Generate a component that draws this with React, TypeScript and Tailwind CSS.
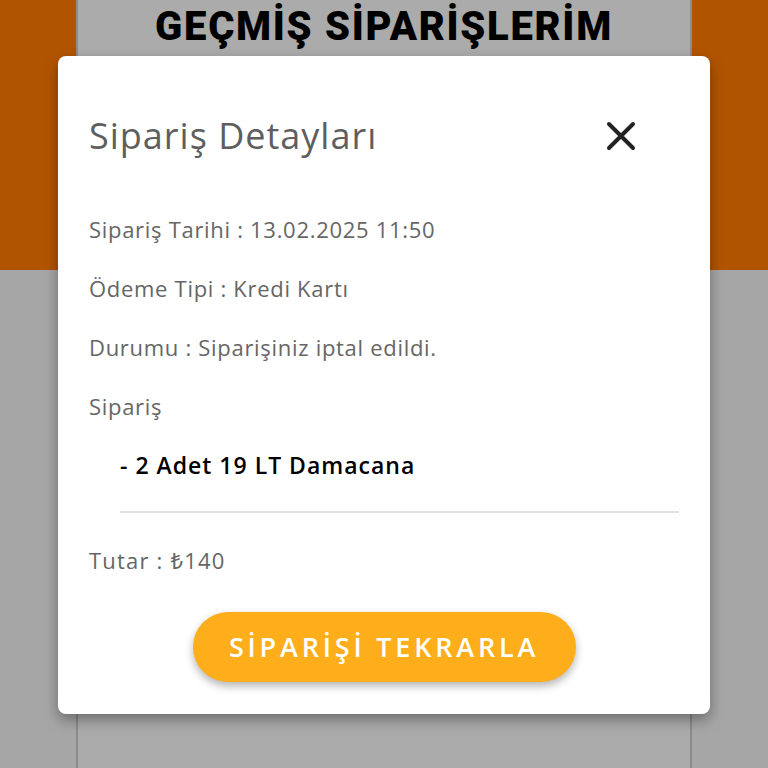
import React from 'react';

const font = { fontFamily: '"Open Sans", "Noto Sans", sans-serif' };

const rows = [
  'Sipariş Tarihi : 13.02.2025 11:50',
  'Ödeme Tipi : Kredi Kartı',
  'Durumu : Siparişiniz iptal edildi.',
  'Sipariş',
];

export default function App() {
  return (
    <div
      className="relative h-[768px] w-full overflow-hidden bg-[linear-gradient(to_bottom,#b15400_270px,#a6a6a6_270px)]"
      style={font}
    >
      {/* page behind the dialog */}
      <div className="mx-auto h-full w-[616px] border-x-2 border-[#8c8c8c] bg-[#ababab]">
        <h1 className="pt-[3px] text-center text-[40px] font-black leading-[48px] tracking-[1.7px] text-black" style={{ fontFamily: 'Roboto, sans-serif' }}>
          GEÇMİŞ SİPARİŞLERİM
        </h1>
      </div>

      {/* dialog */}
      <div className="absolute inset-0 flex justify-center pt-[56px]">
        <div className="h-[658px] w-[652px] rounded-[8px] bg-white px-[31px] shadow-[0_6px_14px_rgba(0,0,0,0.35)]">
          <div className="flex h-[144px] items-start justify-between pt-[59px]">
            <h2 className="text-[36px] leading-[42px] font-normal tracking-[1px] text-[#5e5e5e]">Sipariş Detayları</h2>
            <svg width="30" height="30" viewBox="0 0 30 30" className="mr-[43px] mt-[6px]">
              <path d="M3 3L27 27M27 3L3 27" stroke="#222" strokeWidth="4" strokeLinecap="round" />
            </svg>
          </div>

          <div className="flex flex-col">
            {rows.map((r) => (
              <div key={r} className="flex h-[59px] items-center text-[22px] tracking-[0.7px] text-[#666]">
                {r}
              </div>
            ))}
            <div className="flex h-[59px] items-center pl-[31px] text-[23px] font-semibold tracking-[1px] text-black">
              - 2 Adet 19 LT Damacana
            </div>
            <div className="ml-[31px] mt-[16px] h-[2px] bg-[#e2e2e2]" />
            <div className="flex h-[94px] items-center text-[22px] tracking-[1.2px] text-[#666]">Tutar : ₺140</div>
          </div>

          <div className="flex justify-center pt-[5px]">
            <button className="h-[70px] w-[383px] rounded-full bg-[#fdae1a] text-[27px] font-semibold tracking-[3.8px] text-white shadow-[0_4px_8px_rgba(0,0,0,0.3)]">
              SİPARİŞİ TEKRARLA
            </button>
          </div>
        </div>
      </div>
    </div>
  );
}
